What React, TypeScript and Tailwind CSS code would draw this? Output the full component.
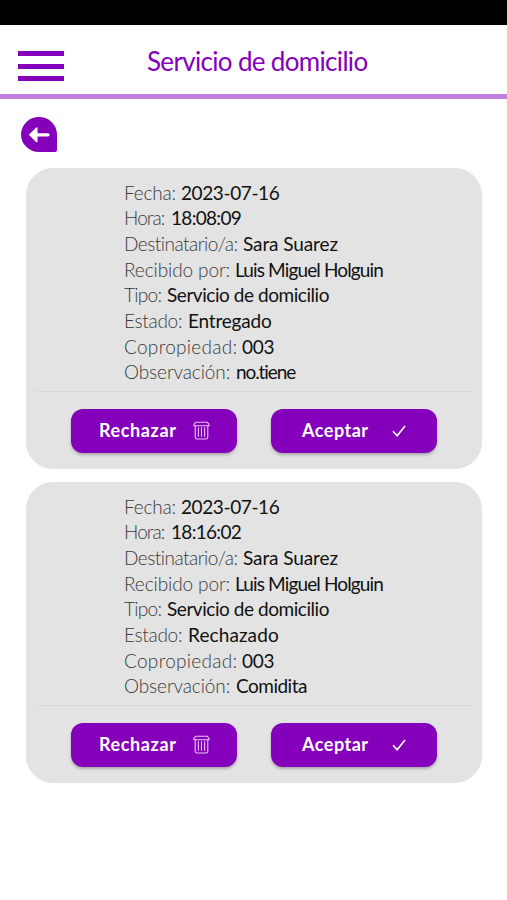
import React from "react";

interface Field {
  label: string;
  value: string;
  labelClass: string;
  valueClass: string;
}

interface Delivery {
  id: number;
  fields: Field[];
}

const commonFields: Field[] = [
  {
    label: "Destinatario/a:",
    value: "Sara Suarez",
    labelClass: "w-[119px] tracking-[-0.5px]",
    valueClass: "tracking-[-0.1px]",
  },
  {
    label: "Recibido por:",
    value: "Luis Miguel Holguin",
    labelClass: "w-[111px] tracking-[-0.1px]",
    valueClass: "tracking-[-0.87px]",
  },
  {
    label: "Tipo:",
    value: "Servicio de domicilio",
    labelClass: "w-[43px] tracking-[-0.7px]",
    valueClass: "tracking-[-0.45px]",
  },
];

const DELIVERIES: Delivery[] = [
  {
    id: 1,
    fields: [
      {
        label: "Fecha:",
        value: "2023-07-16",
        labelClass: "w-[57px] tracking-[-0.2px]",
        valueClass: "tracking-[-0.4px]",
      },
      {
        label: "Hora:",
        value: "18:08:09",
        labelClass: "w-[47px] tracking-[-0.9px]",
        valueClass: "tracking-[-0.7px]",
      },
      ...commonFields,
      {
        label: "Estado:",
        value: "Entregado",
        labelClass: "w-[64px] tracking-[-0.3px]",
        valueClass: "tracking-[-0.2px]",
      },
      {
        label: "Copropiedad:",
        value: "003",
        labelClass: "w-[118px] tracking-[0.3px]",
        valueClass: "tracking-[-0.3px]",
      },
      {
        label: "Observación:",
        value: "no.tiene",
        labelClass: "w-[112px] tracking-[-0.1px]",
        valueClass: "tracking-[-1.1px]",
      },
    ],
  },
  {
    id: 2,
    fields: [
      {
        label: "Fecha:",
        value: "2023-07-16",
        labelClass: "w-[57px] tracking-[-0.2px]",
        valueClass: "tracking-[-0.4px]",
      },
      {
        label: "Hora:",
        value: "18:16:02",
        labelClass: "w-[47px] tracking-[-0.9px]",
        valueClass: "tracking-[-0.7px]",
      },
      ...commonFields,
      {
        label: "Estado:",
        value: "Rechazado",
        labelClass: "w-[64px] tracking-[-0.3px]",
        valueClass: "tracking-[0.1px]",
      },
      {
        label: "Copropiedad:",
        value: "003",
        labelClass: "w-[118px] tracking-[0.3px]",
        valueClass: "tracking-[-0.3px]",
      },
      {
        label: "Observación:",
        value: "Comidita",
        labelClass: "w-[112px] tracking-[-0.1px]",
        valueClass: "tracking-[-0.5px]",
      },
    ],
  },
];

const TrashIcon = () => (
  <svg
    className="h-[19px] w-[17px]"
    viewBox="0 0 17 19"
    fill="none"
    stroke="#e9c4f7"
    strokeWidth="1.1"
    strokeLinejoin="round"
  >
    <path d="M3 1.2h11l2 2v1.6H1V3.2z" />
    <path d="M2.2 4.8v11.4a1.8 1.8 0 0 0 1.8 1.8h9a1.8 1.8 0 0 0 1.8-1.8V4.8" />
    <path d="M5.4 6.2v9.5M8.5 6.2v9.5M11.6 6.2v9.5" />
  </svg>
);

const CheckIcon = () => (
  <svg className="mt-px h-3 w-[14px]" viewBox="0 0 14 12" fill="none" stroke="white" strokeWidth="1.6">
    <path d="M1 6.2l4.2 4.6L13 .9" />
  </svg>
);

const BackIcon = () => (
  <svg className="h-[35px] w-9" viewBox="0 0 36 35">
    <path
      d="M18 0a18 17.5 0 0 1 18 17.5V33a2 2 0 0 1-2 2H18a18 17.5 0 0 1 0-35z"
      fill="#8400bb"
    />
    <path d="M27 17.8H14" stroke="white" strokeWidth="3.2" strokeLinecap="round" />
    <path
      d="M15.8 11v13.6L8.8 17.8z"
      fill="white"
      stroke="white"
      strokeWidth="1.5"
      strokeLinejoin="round"
    />
  </svg>
);

const DeliveryCard: React.FC<{ delivery: Delivery }> = ({ delivery }) => (
  <article className="h-[301px] rounded-[27px] bg-[#e3e3e3] pt-3">
    <dl className="pl-[98px] text-[19px]">
      {delivery.fields.map((field) => (
        <div key={field.label} className="flex h-[25.7px] items-center whitespace-nowrap">
          <dt className={`shrink-0 font-light text-[#3a3a3a] ${field.labelClass}`}>
            {field.label}
          </dt>
          <dd className={`font-normal text-[#111] ${field.valueClass}`}>{field.value}</dd>
        </div>
      ))}
    </dl>
    <hr className="mx-[10px] mt-[5px] border-[#d8d8d8]" />
    <div className="mt-[17px] flex gap-[34px] pl-[45px]">
      <button className="flex h-11 w-[166px] items-center rounded-xl bg-[#8400bb] pl-7 text-[18px] font-bold tracking-[0.6px] text-white shadow-[0_2px_3px_rgba(0,0,0,0.25)]">
        <span className="w-[94px] text-left">Rechazar</span>
        <TrashIcon />
      </button>
      <button className="flex h-11 w-[166px] items-center rounded-xl bg-[#8400bb] pl-[31px] text-[18px] font-bold tracking-[0.5px] text-white shadow-[0_2px_3px_rgba(0,0,0,0.25)]">
        <span className="w-[90px] text-left">Aceptar</span>
        <CheckIcon />
      </button>
    </div>
  </article>
);

const App: React.FC = () => {
  return (
    <div className="min-h-screen bg-white font-['Lato',sans-serif]">
      <div className="h-[25px] bg-black" />
      <header className="flex h-[74px] border-b-[5px] border-[#c07fdc] pl-[18px]">
        <button aria-label="Menu" className="mt-[26px] flex h-[30px] w-[46px] flex-col justify-between">
          <span className="h-[5px] w-full bg-[#8400bb]" />
          <span className="h-[5px] w-full bg-[#8400bb]" />
          <span className="h-[5px] w-full bg-[#8400bb]" />
        </button>
        <h1 className="ml-[83px] mt-[18px] text-[26px] leading-9 tracking-[-0.67px] text-[#8400bb]">
          Servicio de domicilio
        </h1>
      </header>

      <main className="px-[26px] pt-[18px]">
        <button aria-label="Volver" className="-ml-[5px] block">
          <BackIcon />
        </button>
        <div className="mt-4 mr-[-1px] flex flex-col gap-[13px]">
          {DELIVERIES.map((delivery) => (
            <DeliveryCard key={delivery.id} delivery={delivery} />
          ))}
        </div>
      </main>
    </div>
  );
};

export default App;
